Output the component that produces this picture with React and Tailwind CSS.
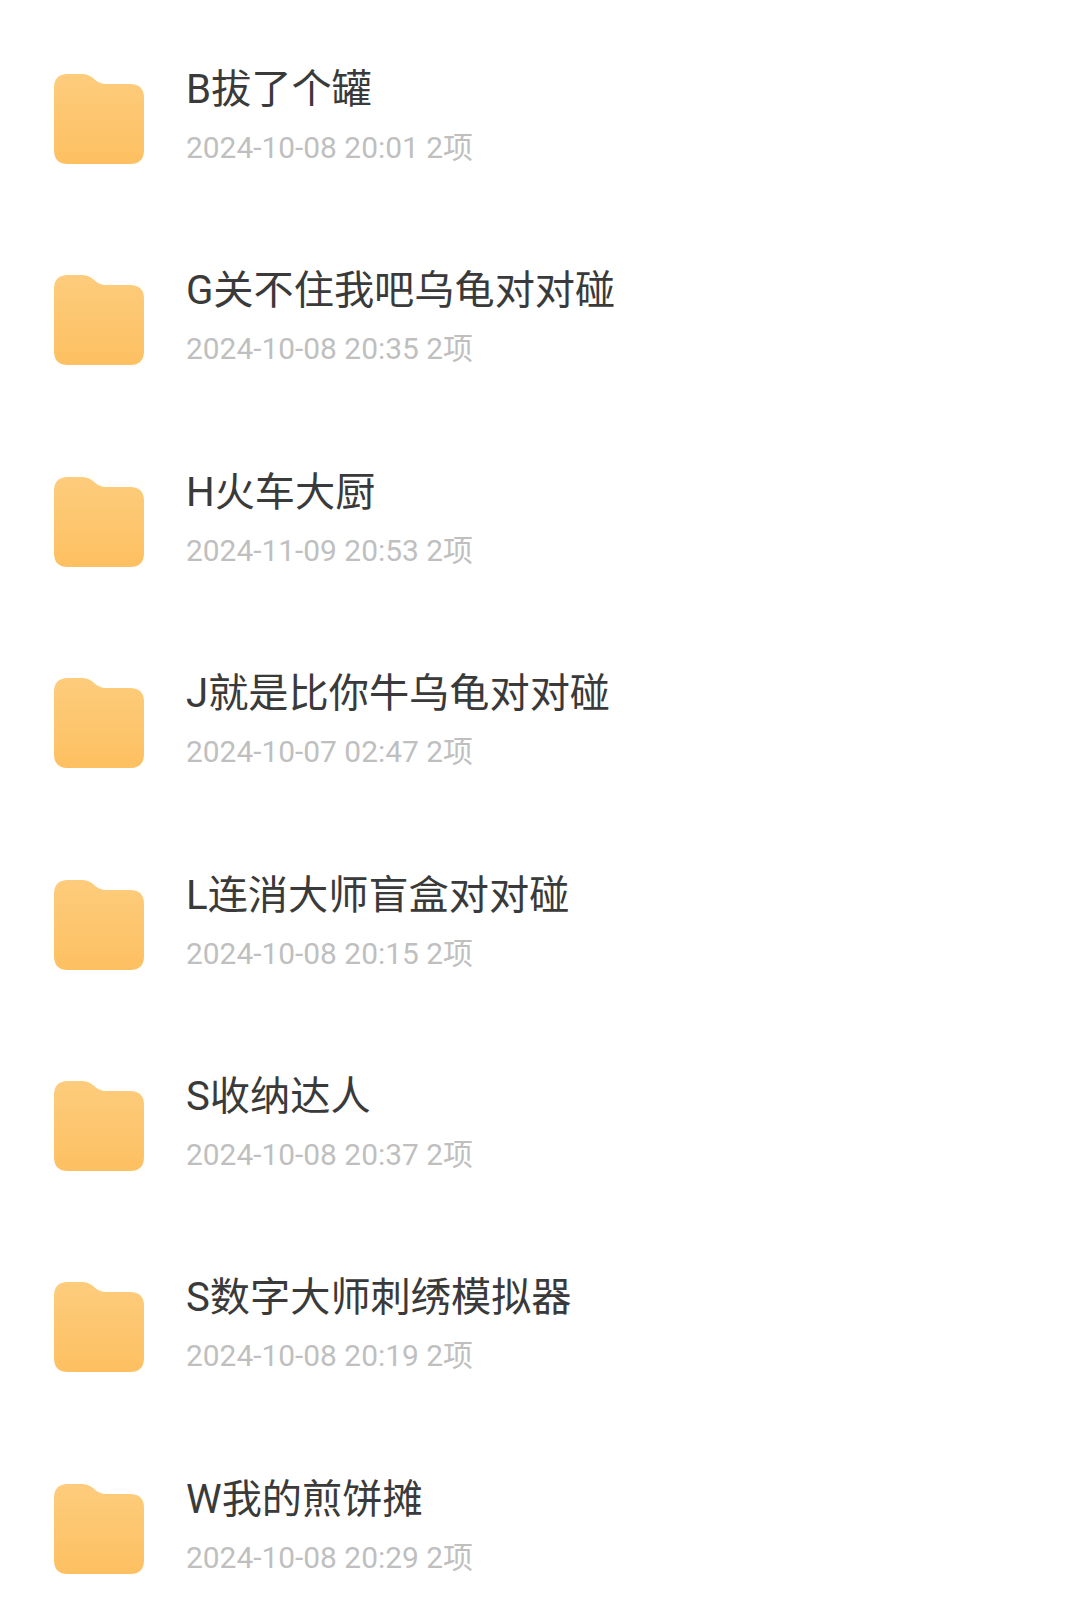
const items = [
  { name: 'B拔了个罐', meta: '2024-10-08 20:01 2项' },
  { name: 'G关不住我吧乌龟对对碰', meta: '2024-10-08 20:35 2项' },
  { name: 'H火车大厨', meta: '2024-11-09 20:53 2项' },
  { name: 'J就是比你牛乌龟对对碰', meta: '2024-10-07 02:47 2项' },
  { name: 'L连消大师盲盒对对碰', meta: '2024-10-08 20:15 2项' },
  { name: 'S收纳达人', meta: '2024-10-08 20:37 2项' },
  { name: 'S数字大师刺绣模拟器', meta: '2024-10-08 20:19 2项' },
  { name: 'W我的煎饼摊', meta: '2024-10-08 20:29 2项' },
]

function FolderIcon() {
  return (
    <svg width="90" height="90" viewBox="0 0 90 90" className="shrink-0">
      <defs>
        <linearGradient id="folderFill" x1="0" y1="0" x2="0" y2="1">
          <stop offset="0" stopColor="#fdcc7c" />
          <stop offset="1" stopColor="#fdc061" />
        </linearGradient>
      </defs>
      <path
        d="M0 14 Q0 0 14 0 H28 Q34 0 39 4 Q45 10 52 10 H76 Q90 10 90 24 V76 Q90 90 76 90 H14 Q0 90 0 76 Z"
        fill="url(#folderFill)"
      />
    </svg>
  )
}

export default function App() {
  return (
    <div
      className="w-[1080px] h-[1616px] bg-white overflow-hidden pt-[74px] pl-[54px] flex flex-col gap-[111.4px]"
      style={{ fontFamily: '"Roboto", "Noto Sans CJK SC", sans-serif' }}
    >
      {items.map((item) => (
        <div key={item.name} className="flex items-start gap-[42px] h-[90px]">
          <FolderIcon />
          <div className="flex flex-col -mt-[8px]">
            <div className="text-[40.2px] leading-[47px] text-[#3a3a3a]">{item.name}</div>
            <div className="text-[29.9px] leading-[35px] mt-[17px] text-[#bfbfbf]">{item.meta}</div>
          </div>
        </div>
      ))}
    </div>
  )
}
